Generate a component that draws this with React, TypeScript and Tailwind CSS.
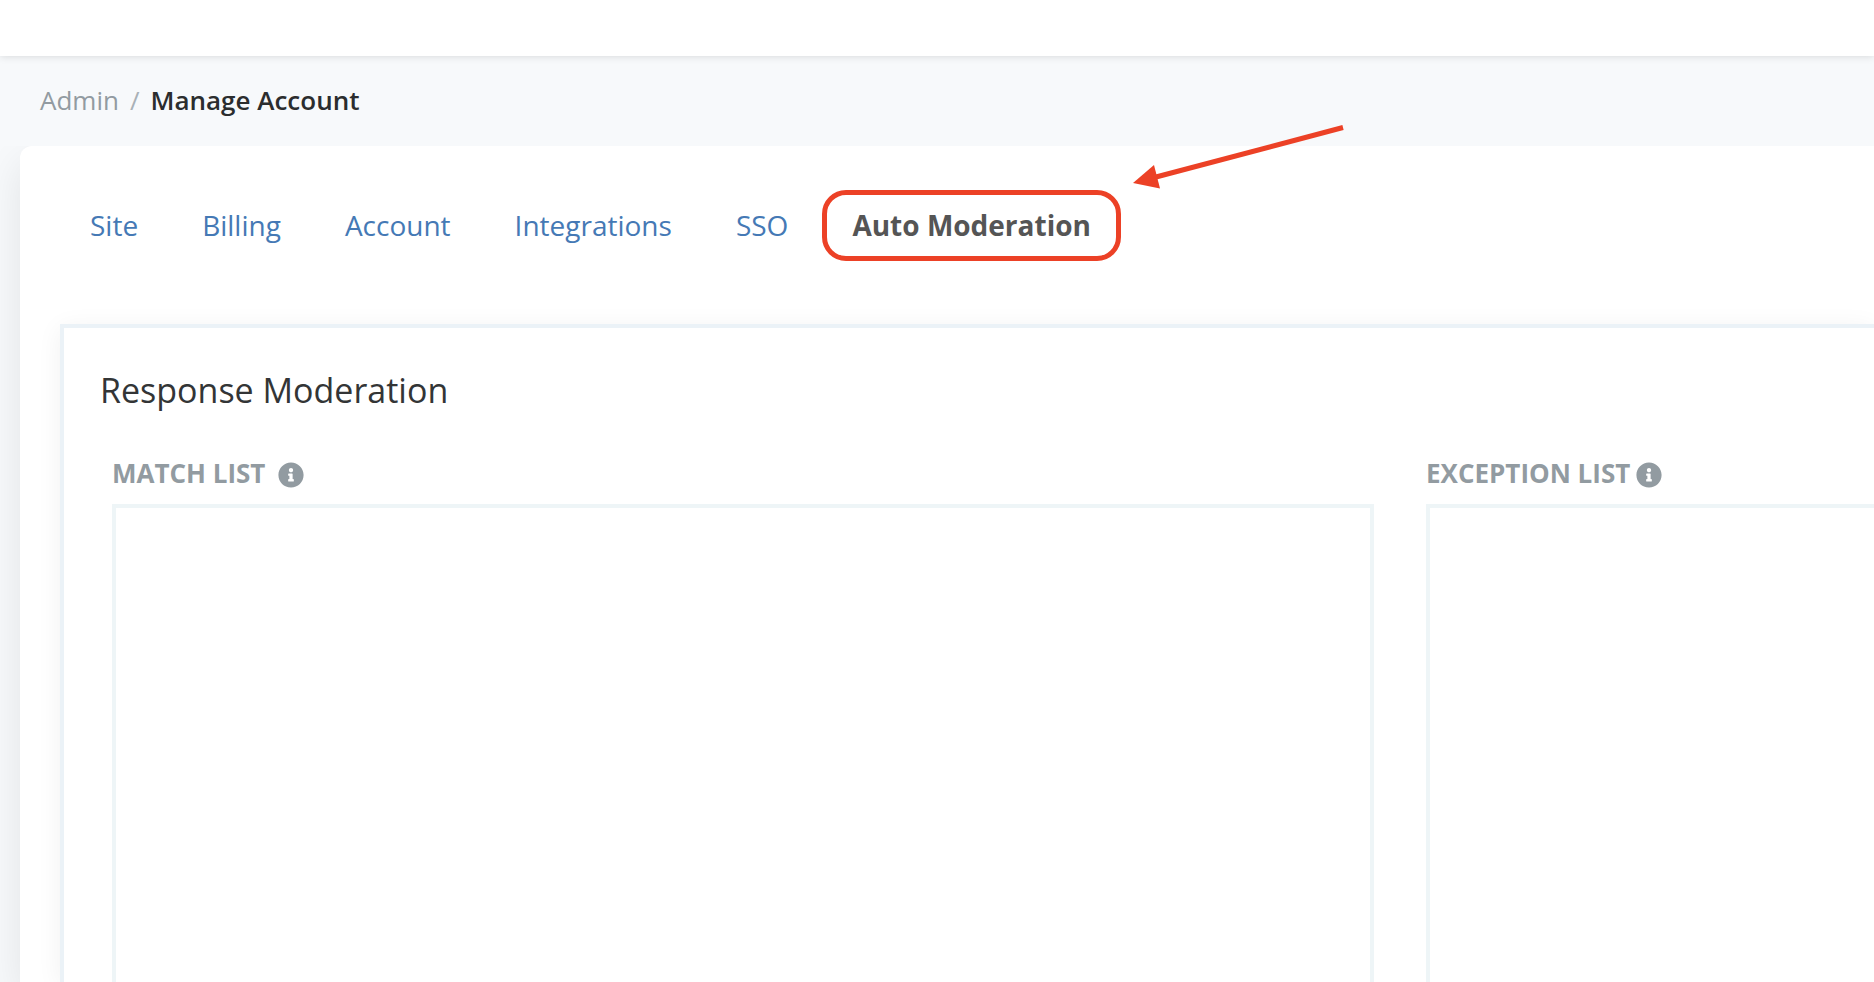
import { useState } from "react";
import { FaInfoCircle } from "react-icons/fa";

const tabs = ["Site", "Billing", "Account", "Integrations", "SSO", "Auto Moderation"];

function WordList({ id, label, gap, className }: { id: string; label: string; gap: string; className: string }) {
  const [value, setValue] = useState("");
  return (
    <div className="flex flex-col">
      <label htmlFor={id} className={`flex items-center text-[26px] leading-9 font-bold uppercase text-[#929ba1] ${gap}`}>
        {label}
        <FaInfoCircle className="size-[26px] mt-1" />
      </label>
      <textarea
        id={id}
        value={value}
        onChange={(e) => setValue(e.target.value)}
        className={`mt-[13px] flex-1 w-full resize-none border-4 border-b-0 border-[#eef5f7] bg-white p-4 text-[26px] outline-none ${className}`}
      />
    </div>
  );
}

export default function App() {
  const [active, setActive] = useState("Auto Moderation");

  return (
    <div className="min-h-screen flex flex-col overflow-hidden bg-[#f7f9fb] font-['Open_Sans',sans-serif]">
      <header className="relative h-14 bg-white shadow-[0_0_8px_rgba(0,0,0,0.15)]" />

      <nav aria-label="Breadcrumb" className="flex h-[90px] items-center gap-[11px] px-10 pb-0.5 text-[26px] leading-9">
        <a href="#admin" className="text-[#929ba1]">Admin</a>
        <span className="text-[#a9b1b7]">/</span>
        <span className="font-semibold text-[#2b2d2e]">Manage Account</span>
      </nav>

      <div className="relative flex flex-1 flex-col">
        <div className="flex flex-1 flex-col overflow-hidden pl-5">
          <main className="flex flex-1 flex-col rounded-tl-[12px] bg-white pl-10 shadow-[0_16px_40px_rgba(0,0,0,0.09)]">
            <div className="mt-11 flex h-[71px] items-stretch text-[28px] leading-10">
              {tabs.map((t) => (
                <a
                  key={t}
                  href={`#${t.toLowerCase().replace(" ", "-")}`}
                  onClick={() => setActive(t)}
                  className={
                    t === active
                      ? "ml-0.5 flex items-center rounded-[24px] border-5 border-[#ec4126] px-[25px] pb-0.5 font-bold text-[#555]"
                      : "flex items-center px-8 pb-0.5 text-[#4579b5] first:pl-[30px]"
                  }
                >
                  {t}
                </a>
              ))}
            </div>

            <section className="mt-[63px] flex flex-1 flex-col border-4 border-r-0 border-b-0 border-[#ebf2f7] bg-white shadow-[0_4px_24px_rgba(0,0,0,0.06)]">
              <h2 className="mt-[37px] ml-9 text-[34px] leading-[50px] text-[#333536]">Response Moderation</h2>
              <div className="mt-10 ml-12 grid flex-1 grid-cols-[1262fr_448fr] gap-[52px]">
                <WordList id="match-list" label="Match List" gap="gap-[13px]" className="" />
                <WordList id="exception-list" label="Exception List" gap="gap-1.5" className="border-r-0" />
              </div>
            </section>
          </main>
        </div>

        {/* pointer to the auto moderation tab */}
        <svg className="pointer-events-none absolute left-[1132px] -top-[22px] h-[66px] w-[214px]" viewBox="0 0 214 66" fill="none">
          <path d="M211 3.5 24 53" stroke="#ec4126" strokeWidth="5" />
          <path d="M1 59 22 41 28 64.500Z" fill="#ec4126" />
        </svg>
      </div>
    </div>
  );
}
